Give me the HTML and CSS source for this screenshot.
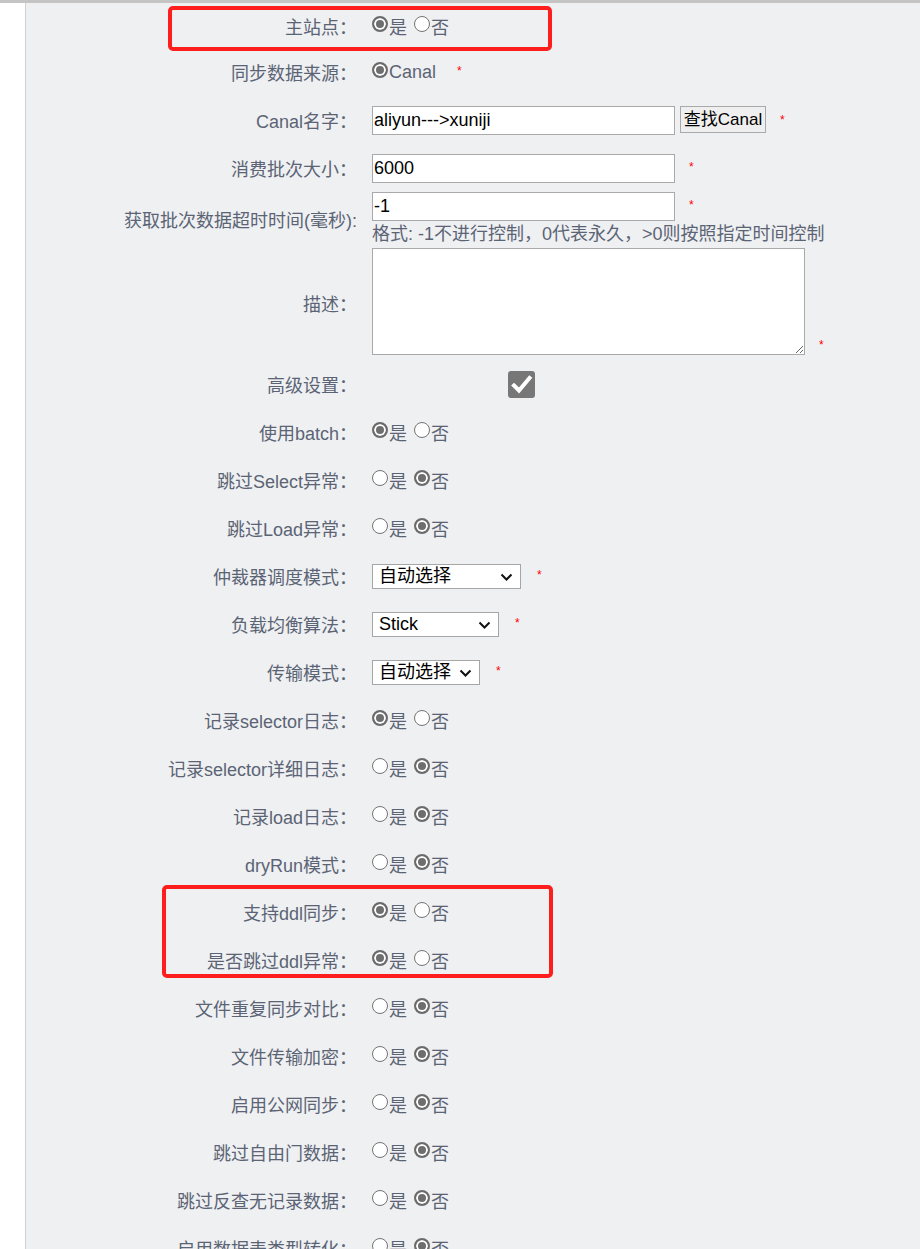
FILE: index.html
```html
<!DOCTYPE html>
<html lang="zh-CN">
<head>
    <meta charset="UTF-8">
    <meta name="viewport" content="width=device-width, initial-scale=1.0">
    <title>同步任务配置</title>
    <link rel="stylesheet" href="styles.css">
</head>
<body>

    <div class="layout">
        <aside class="side"></aside>

        <main class="content">
            <div class="form">

                <div class="row">
                    <label class="lbl">主站点：</label>
                    <div class="ctl">
                        <label class="opt"><input type="radio" name="master" checked>是</label>
                        <label class="opt"><input type="radio" name="master">否</label>
                    </div>
                </div>

                <div class="row">
                    <label class="lbl">同步数据来源：</label>
                    <div class="ctl">
                        <label class="opt"><input type="radio" name="source" checked>Canal</label>
                        <span class="req req-wide">*</span>
                    </div>
                </div>

                <div class="row">
                    <label class="lbl">Canal名字：</label>
                    <div class="ctl ctl-top">
                        <input type="text" class="text" value="aliyun--->xuniji">
                        <button class="btn">查找Canal</button>
                        <span class="req">*</span>
                    </div>
                </div>

                <div class="row">
                    <label class="lbl">消费批次大小：</label>
                    <div class="ctl">
                        <input type="text" class="text" value="6000">
                        <span class="req">*</span>
                    </div>
                </div>

                <div class="row row-tall">
                    <label class="lbl">获取批次数据超时时间(毫秒):</label>
                    <div class="ctl-stack">
                        <div class="ctl">
                            <input type="text" class="text" value="-1">
                            <span class="req">*</span>
                        </div>
                        <div class="hint">格式: -1不进行控制，0代表永久，&gt;0则按照指定时间控制</div>
                    </div>
                </div>

                <div class="row row-desc">
                    <label class="lbl">描述：</label>
                    <div class="ctl ctl-bottom">
                        <textarea class="area"></textarea>
                        <span class="req req-low">*</span>
                    </div>
                </div>

                <div class="row">
                    <label class="lbl">高级设置：</label>
                    <div class="ctl">
                        <span class="cbx">
                            <svg width="27" height="27" viewBox="0 0 27 27">
                                <polyline points="6,14.5 11,19.5 21.5,7" fill="none" stroke="#fff" stroke-width="4" stroke-linecap="square"/>
                            </svg>
                        </span>
                    </div>
                </div>

                <div class="row">
                    <label class="lbl">使用batch：</label>
                    <div class="ctl">
                        <label class="opt"><input type="radio" name="batch" checked>是</label>
                        <label class="opt"><input type="radio" name="batch">否</label>
                    </div>
                </div>

                <div class="row">
                    <label class="lbl">跳过Select异常：</label>
                    <div class="ctl">
                        <label class="opt"><input type="radio" name="skipSelect">是</label>
                        <label class="opt"><input type="radio" name="skipSelect" checked>否</label>
                    </div>
                </div>

                <div class="row">
                    <label class="lbl">跳过Load异常：</label>
                    <div class="ctl">
                        <label class="opt"><input type="radio" name="skipLoad">是</label>
                        <label class="opt"><input type="radio" name="skipLoad" checked>否</label>
                    </div>
                </div>

                <div class="row">
                    <label class="lbl">仲裁器调度模式：</label>
                    <div class="ctl">
                        <span class="sel-wrap">
                            <select class="sel sel-1">
                                <option>自动选择</option>
                            </select>
                            <svg class="chev" width="13" height="8" viewBox="0 0 13 8"><polyline points="1.5,1.5 6.5,6.5 11.5,1.5" fill="none" stroke="#111" stroke-width="2"/></svg>
                        </span>
                        <span class="req req-sel">*</span>
                    </div>
                </div>

                <div class="row">
                    <label class="lbl">负载均衡算法：</label>
                    <div class="ctl">
                        <span class="sel-wrap">
                            <select class="sel sel-2">
                                <option>Stick</option>
                            </select>
                            <svg class="chev" width="13" height="8" viewBox="0 0 13 8"><polyline points="1.5,1.5 6.5,6.5 11.5,1.5" fill="none" stroke="#111" stroke-width="2"/></svg>
                        </span>
                        <span class="req req-sel">*</span>
                    </div>
                </div>

                <div class="row">
                    <label class="lbl">传输模式：</label>
                    <div class="ctl">
                        <span class="sel-wrap">
                            <select class="sel sel-3">
                                <option>自动选择</option>
                            </select>
                            <svg class="chev" width="13" height="8" viewBox="0 0 13 8"><polyline points="1.5,1.5 6.5,6.5 11.5,1.5" fill="none" stroke="#111" stroke-width="2"/></svg>
                        </span>
                        <span class="req req-sel">*</span>
                    </div>
                </div>

                <div class="row">
                    <label class="lbl">记录selector日志：</label>
                    <div class="ctl">
                        <label class="opt"><input type="radio" name="selLog" checked>是</label>
                        <label class="opt"><input type="radio" name="selLog">否</label>
                    </div>
                </div>

                <div class="row">
                    <label class="lbl">记录selector详细日志：</label>
                    <div class="ctl">
                        <label class="opt"><input type="radio" name="selDetail">是</label>
                        <label class="opt"><input type="radio" name="selDetail" checked>否</label>
                    </div>
                </div>

                <div class="row">
                    <label class="lbl">记录load日志：</label>
                    <div class="ctl">
                        <label class="opt"><input type="radio" name="loadLog">是</label>
                        <label class="opt"><input type="radio" name="loadLog" checked>否</label>
                    </div>
                </div>

                <div class="row">
                    <label class="lbl">dryRun模式：</label>
                    <div class="ctl">
                        <label class="opt"><input type="radio" name="dryRun">是</label>
                        <label class="opt"><input type="radio" name="dryRun" checked>否</label>
                    </div>
                </div>

                <div class="row">
                    <label class="lbl">支持ddl同步：</label>
                    <div class="ctl">
                        <label class="opt"><input type="radio" name="ddlSync" checked>是</label>
                        <label class="opt"><input type="radio" name="ddlSync">否</label>
                    </div>
                </div>

                <div class="row">
                    <label class="lbl">是否跳过ddl异常：</label>
                    <div class="ctl">
                        <label class="opt"><input type="radio" name="ddlSkip" checked>是</label>
                        <label class="opt"><input type="radio" name="ddlSkip">否</label>
                    </div>
                </div>

                <div class="row">
                    <label class="lbl">文件重复同步对比：</label>
                    <div class="ctl">
                        <label class="opt"><input type="radio" name="fileDup">是</label>
                        <label class="opt"><input type="radio" name="fileDup" checked>否</label>
                    </div>
                </div>

                <div class="row">
                    <label class="lbl">文件传输加密：</label>
                    <div class="ctl">
                        <label class="opt"><input type="radio" name="fileEnc">是</label>
                        <label class="opt"><input type="radio" name="fileEnc" checked>否</label>
                    </div>
                </div>

                <div class="row">
                    <label class="lbl">启用公网同步：</label>
                    <div class="ctl">
                        <label class="opt"><input type="radio" name="publicNet">是</label>
                        <label class="opt"><input type="radio" name="publicNet" checked>否</label>
                    </div>
                </div>

                <div class="row">
                    <label class="lbl">跳过自由门数据：</label>
                    <div class="ctl">
                        <label class="opt"><input type="radio" name="skipFree">是</label>
                        <label class="opt"><input type="radio" name="skipFree" checked>否</label>
                    </div>
                </div>

                <div class="row">
                    <label class="lbl">跳过反查无记录数据：</label>
                    <div class="ctl">
                        <label class="opt"><input type="radio" name="skipBack">是</label>
                        <label class="opt"><input type="radio" name="skipBack" checked>否</label>
                    </div>
                </div>

                <div class="row">
                    <label class="lbl">启用数据表类型转化：</label>
                    <div class="ctl">
                        <label class="opt"><input type="radio" name="typeConv">是</label>
                        <label class="opt"><input type="radio" name="typeConv" checked>否</label>
                    </div>
                </div>

            </div>

            <!-- 标注框 -->
            <div class="mark mark-1"></div>
            <div class="mark mark-2"></div>
        </main>
    </div>

</body>
</html>
```

FILE: styles.css
```css
body {
    margin: 0;
    background-color: #fff;
    font-family: "Liberation Sans", "Noto Sans CJK SC", sans-serif;
    font-size: 18px;
    color: #5b6475;
}

.layout {
    display: flex;
    border-top: 3px solid #c4c4c4;
    min-height: 1300px;
}

.side {
    width: 25px;
    flex-shrink: 0;
    border-right: 1px solid #d2d2d2;
    background-color: #fff;
}

.content {
    position: relative;
    flex: 1;
    background-color: #eff0f2;
}

.row {
    display: grid;
    grid-template-columns: 331px 1fr;
    column-gap: 15px;
    align-items: center;
    min-height: 48px;
}

.row:first-child {
    min-height: 45px;
}

.row-tall {
    min-height: 54px;
}

.row-desc {
    min-height: 114px;
}

.lbl {
    text-align: right;
    white-space: nowrap;
}

.ctl {
    display: flex;
    align-items: center;
}

.ctl-top {
    align-items: flex-start;
}

.ctl-bottom {
    align-items: flex-end;
    padding-bottom: 3px;
}

.ctl-stack {
    display: flex;
    flex-direction: column;
    align-items: flex-start;
}

.hint {
    line-height: 23px;
    margin-top: 2px;
    white-space: nowrap;
}

.opt {
    display: inline-flex;
    align-items: center;
    white-space: nowrap;
}

.opt + .opt {
    margin-left: 7px;
}

.opt input[type="radio"] {
    appearance: none;
    box-sizing: border-box;
    width: 16px;
    height: 16px;
    margin: -4px 1px 0 0;
    border: 1.5px solid #737373;
    border-radius: 50%;
    background-color: #fff;
}

.opt input[type="radio"]:checked {
    border: 2px solid #6b6b6b;
    background-color: #6e6e6e;
    box-shadow: inset 0 0 0 2px #fff;
}

.text {
    box-sizing: border-box;
    width: 303px;
    height: 29px;
    margin: 0;
    padding: 0 1px;
    border: 1px solid #a9a9a9;
    background-color: #fff;
    font-family: "Liberation Sans", "Noto Sans CJK SC", sans-serif;
    font-size: 18px;
    color: #000;
}

.btn {
    box-sizing: border-box;
    width: 86px;
    height: 27px;
    margin: 0 0 0 5px;
    padding: 0 1px;
    border: 1px solid #a9a9a9;
    border-radius: 0;
    background-color: #efefef;
    font-family: "Liberation Sans", "Noto Sans CJK SC", sans-serif;
    font-size: 17px;
    line-height: 25px;
    color: #000;
}

.area {
    box-sizing: border-box;
    width: 433px;
    height: 107px;
    margin: 0;
    border: 1px solid #a9a9a9;
    background-color: #fff;
    resize: both;
}

.sel-wrap {
    position: relative;
    display: inline-flex;
}

.sel {
    appearance: none;
    box-sizing: border-box;
    height: 25px;
    margin: 0;
    padding: 0 24px 0 6px;
    border: 1px solid #a6a6a6;
    border-radius: 0;
    background-color: #fff;
    font-family: "Liberation Sans", "Noto Sans CJK SC", sans-serif;
    font-size: 18px;
    color: #000;
}

.chev {
    position: absolute;
    right: 8px;
    top: 9px;
    pointer-events: none;
}

.sel-1 { width: 149px; }
.sel-2 { width: 127px; }
.sel-3 { width: 108px; }

.req {
    align-self: center;
    margin-left: 14px;
    margin-top: -3px;
    font-size: 12px;
    line-height: 12px;
    color: #f00;
}

.ctl-top .req {
    margin-top: 0;
}

.req-wide {
    margin-left: 21px;
}

.req-sel {
    margin-left: 16px;
}

.req-low {
    align-self: flex-end;
    margin-bottom: 4px;
}

.cbx {
    display: inline-flex;
    width: 27px;
    height: 27px;
    margin-left: 136px;
    border-radius: 3px;
    background-color: #777;
}

.mark {
    position: absolute;
    box-sizing: border-box;
    border: 4px solid #ff1e1e;
    border-radius: 5px;
}

.mark-1 {
    left: 142px;
    top: 3px;
    width: 384px;
    height: 45px;
}

.mark-2 {
    left: 136px;
    top: 882px;
    width: 391px;
    height: 93px;
}
```
